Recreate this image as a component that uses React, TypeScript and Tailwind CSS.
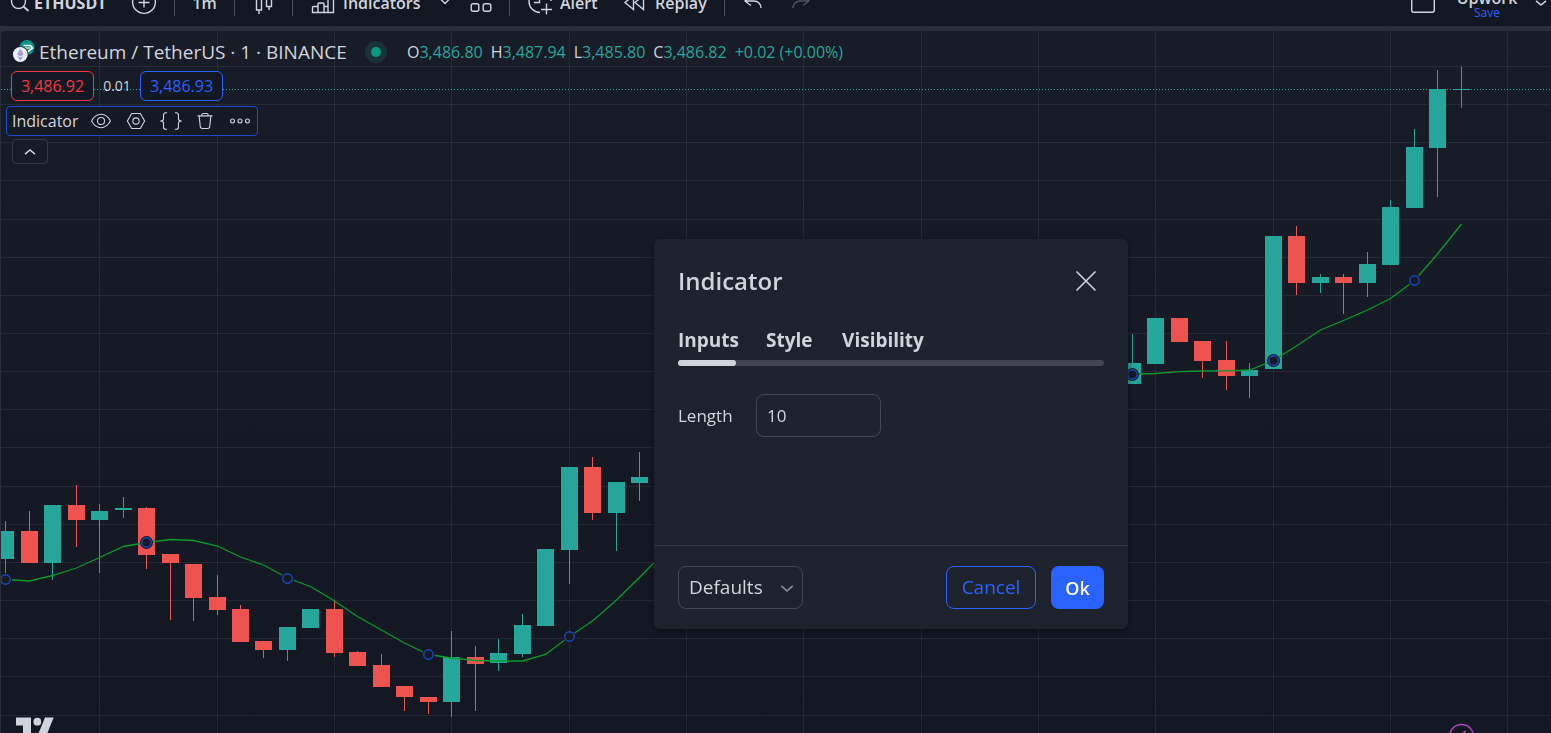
import React, { useState } from 'react';

type Candle = [x: number, top: number, bottom: number, high: number, low: number, up: boolean];

// x, body top, body bottom, wick top, wick bottom, up
const candles: Candle[] = [
  [5, 531, 559, 521, 573, true],
  [29, 531, 563, 511, 563, false],
  [52, 505, 563, 505, 580, true],
  [76, 505, 520, 485, 547, false],
  [99, 511, 520, 504, 573, true],
  [123, 508, 510, 497, 518, true],
  [146, 508, 555, 507, 569, false],
  [170, 554, 563, 554, 620, false],
  [193, 564, 598, 564, 621, false],
  [217, 597, 610, 575, 615, false],
  [240, 609, 642, 605, 642, false],
  [263, 641, 650, 641, 658, false],
  [287, 627, 650, 627, 661, true],
  [310, 609, 628, 609, 628, true],
  [334, 609, 653, 600, 657, false],
  [357, 652, 666, 651, 666, false],
  [381, 665, 687, 654, 687, false],
  [404, 686, 697, 686, 711, false],
  [428, 697, 702, 697, 714, false],
  [451, 657, 702, 631, 717, true],
  [475, 657, 664, 646, 711, false],
  [498, 653, 663, 639, 671, true],
  [522, 625, 654, 614, 657, true],
  [545, 549, 626, 549, 626, true],
  [569, 467, 550, 467, 584, true],
  [592, 467, 513, 457, 520, false],
  [616, 482, 513, 482, 551, true],
  [639, 477, 483, 452, 501, true],
  [1132, 363, 384, 334, 384, true],
  [1155, 318, 364, 318, 364, true],
  [1179, 318, 342, 318, 342, false],
  [1202, 341, 361, 341, 378, false],
  [1226, 360, 376, 341, 390, false],
  [1249, 370, 376, 363, 398, true],
  [1273, 236, 369, 236, 369, true],
  [1296, 236, 283, 226, 295, false],
  [1320, 277, 283, 274, 293, true],
  [1343, 277, 283, 274, 314, false],
  [1367, 264, 283, 252, 297, true],
  [1390, 207, 265, 200, 265, true],
  [1414, 147, 208, 129, 208, true],
  [1437, 89, 148, 70, 197, true],
  [1461, 89, 90, 67, 108, true],
];

const average =
  '5,579.5 29,581 52,575.5 76,568 99,557.5 123,546.5 146,542.5 170,539.5 193,540.5 217,546 240,557 263,565 287,578 311,587 334,601 357,616.5 381,630 404,643 428,654.5 451,658 475,660.5 498,661 522,661 545,654.5 569,636.5 592,621 616,600 639,577.5 662,554 1109,374.5 1132,374 1155,373.5 1179,371.7 1202,371 1226,370.8 1249,370 1273,360.5 1296,346 1320,330 1343,320.5 1367,310 1390,298.5 1414,280.5 1437,254 1461,224';

const markers = [
  [5.5, 579.5],
  [146.5, 542.5],
  [287.5, 578.5],
  [428.5, 654.5],
  [569.5, 636.5],
  [1132.5, 374.5],
  [1273.5, 360.5],
  [1414.5, 280.5],
];

const gridX = [99, 217, 334, 451, 569, 686, 803, 921, 1038, 1155, 1273, 1390, 1507];
const gridY = [66, 104, 142, 180, 219, 257, 295, 333, 371, 409, 447, 486, 524, 562, 600, 638, 676, 715];

const Icon: React.FC<{ children: React.ReactNode; className?: string }> = ({ children, className = 'w-7 h-7' }) => (
  <svg viewBox="0 0 28 28" fill="none" stroke="currentColor" strokeWidth="1.4" className={`shrink-0 ${className}`}>
    {children}
  </svg>
);

const Separator = () => <div className="w-px h-[26px] bg-[#4a4d57] shrink-0" />;

const Toolbar = () => (
  <header className="h-[46px] -mt-5 flex items-center shrink-0 bg-[#131722] text-[#d1d4dc] text-base font-semibold">
    <button className="w-[130px] pl-1.5 flex items-center">
      <Icon>
        <circle cx="12.5" cy="12.5" r="7" />
        <path d="M17.5 17.5l5 4.5" strokeWidth="1.8" />
      </Icon>
      <span className="font-bold">ETHUSDT</span>
    </button>
    <button aria-label="Compare symbols">
      <Icon>
        <circle cx="14" cy="13" r="11.4" />
        <path d="M14 7.5v11M8.500 13.500h11" />
      </Icon>
    </button>
    <div className="w-4" />
    <Separator />
    <button className="w-[59px]">1m</button>
    <Separator />
    <button aria-label="Candles" className="w-[57px] pl-[15px]">
      <Icon>
        <path d="M6.500 4.500h5v16.500h-5zM16.500 6.500h5v11h-5zM9 21v4M19 17.500v3.500M19 3v3.500" />
      </Icon>
    </button>
    <Separator />
    <button className="w-[138px] pl-4 flex items-center gap-1.5">
      <Icon>
        <path d="M3.500 23.500v-5a1 1 0 0 1 1-1h4.500v6zM9 23.500v-8.500a1 1 0 0 1 1-1h4a1 1 0 0 1 1 1v8.500zM15 23.500v-6h4v6zM19 23.500v-12.500a1 1 0 0 1 1-1h3.500a1 1 0 0 1 1 1v12.500zM3 9l7-6 5 4 8-6" />
      </Icon>
      Indicators
    </button>
    <button aria-label="Favorite indicators">
      <Icon>
        <path d="M9.500 10l4.500 4.500 4.500-4.500" />
      </Icon>
    </button>
    <button aria-label="Templates" className="ml-2">
      <Icon>
        <rect x="4.200" y="2.500" width="7.600" height="7.600" rx="2" />
        <rect x="16.200" y="2.500" width="7.600" height="7.600" rx="2" />
        <rect x="4.200" y="14.700" width="7.600" height="7.600" rx="2" />
        <rect x="16.200" y="14.700" width="7.600" height="7.600" rx="2" />
      </Icon>
    </button>
    <div className="w-3.5" />
    <Separator />
    <button className="w-24 pl-4 flex items-center gap-1.5">
      <Icon>
        <path d="M14 23.500A11 11 0 1 1 25 12M13.500 6v7.500H8M20.500 14.500v11M15 20.500h11" />
      </Icon>
      Alert
    </button>
    <button className="w-[118px] pl-[15px] flex items-center gap-1.5">
      <Icon>
        <path d="M12.500 6.500v14l-8.500-7zM22.500 6.500v14l-8.500-7z" />
      </Icon>
      Replay
    </button>
    <Separator />
    <button aria-label="Undo" className="ml-3.5">
      <Icon>
        <path d="M12 7l-6 5 6 4.500M6 12h9c4 0 7 3 7 7" />
      </Icon>
    </button>
    <button aria-label="Redo" className="ml-5 text-[#50535e]">
      <Icon>
        <path d="M16 7l6 5-6 4.500M22 12h-9c-4 0-7 3-7 7" />
      </Icon>
    </button>
    <button aria-label="Select layout" className="ml-auto">
      <Icon>
        <rect x="2.700" y="1" width="22.600" height="22.300" rx="2" />
      </Icon>
    </button>
    <button className="ml-5 w-[60px] flex flex-col items-center">
      <span className="leading-5">Upwork</span>
      <span className="text-xs leading-[10px] font-normal text-[#2962ff]">Save</span>
    </button>
    <button aria-label="Manage layouts" className="ml-3.5">
      <Icon className="w-5 h-7">
        <path d="M7 11l7 6 7-6" strokeWidth="2" />
      </Icon>
    </button>
  </header>
);

// drawn in window coordinates, shifted up by the toolbar's height
const Chart = () => (
  <svg className="absolute inset-0 w-full h-full">
    <g transform="translate(-1 -31)">
      <g fill="#f0f3fa" fillOpacity="0.07" shapeRendering="crispEdges">
        {gridX.map((x) => (
          <rect key={x} x={x} y="31" width="1" height="100%" />
        ))}
        {gridY.map((y) => (
          <rect key={y} x="0" y={y} width="100%" height="1" />
        ))}
      </g>
      <line x1="1" x2="100%" y1="89.5" y2="89.5" stroke="#26a69a" strokeDasharray="1 2" shapeRendering="crispEdges" />
      <g shapeRendering="crispEdges">
        {candles.map(([x, top, bottom, high, low, up]) => (
          <g key={x} fill={up ? '#26a69a' : '#ef5350'}>
            <rect x={x} y={high} width="1" height={low - high} />
            <rect x={x - 8} y={top} width="17" height={bottom - top} />
          </g>
        ))}
      </g>
      <polyline points={average} transform="translate(.5 0)" fill="none" stroke="#089a2b" strokeWidth="1.3" />
      {markers.map(([x, y]) => (
        <g key={x}>
          <circle cx={x} cy={y} r="6.500" fill="#151924" />
          <circle cx={x} cy={y} r="4.700" fill="none" stroke="#1c47c4" strokeWidth="1.4" />
        </g>
      ))}
      <g fill="#d1d4dc">
        <path d="M16 717.600h15V740h-8v-14.500h-7zM45 717.600h8.700L44.500 740h-8.700z" />
        <circle cx="37.300" cy="721.700" r="3.900" />
      </g>
      <g fill="none" stroke="#ab47bc" strokeWidth="1.600">
        <circle cx="1461.500" cy="736.500" r="12" />
        <path d="M1465.500 731l-7 6h6l-6 6" />
      </g>
    </g>
  </svg>
);

const Legend = () => {
  const values = [
    ['O', '3,486.80'],
    ['H', '3,487.94'],
    ['L', '3,485.80'],
    ['C', '3,486.82'],
  ];

  return (
    <div className="relative flex flex-col items-start">
      <div className="h-10 pl-2.5 pt-0.5 flex items-center whitespace-nowrap">
        <svg viewBox="0 0 24 24" className="w-6 h-6 mr-1">
          <circle cx="16" cy="7.500" r="7.500" fill="#0d9488" />
          <path d="M12.500 5.500h7l2 2.500-6.500 5" fill="none" stroke="#fff" strokeWidth="1.500" />
          <path d="M13.500 8h6" stroke="#fff" />
          <circle cx="9.300" cy="14.500" r="8.300" fill="#181c27" />
          <circle cx="9.300" cy="14.500" r="7.400" fill="#eef0fb" />
          <path d="M9.300 8.500l-3.300 6 3.300 2z" fill="#8fa3ef" />
          <path d="M9.300 8.500l3.300 6-3.300 2z" fill="#a78be0" />
          <path d="M6 15.700l3.300 4.800 3.300-4.800-3.300 2z" fill="#8a92d8" />
        </svg>
        <h1 className="w-[326px] text-[19px] text-[#d1d4dc] font-medium">Ethereum / TetherUS · 1 · BINANCE</h1>
        <span className="w-[22px] h-[22px] rounded-full bg-[#1a3338] flex items-center justify-center">
          <span className="w-2.5 h-2.5 rounded-full bg-[#089981]" />
        </span>
        <div className="ml-5 flex gap-2 text-base text-[#26a69a]">
          {values.map(([label, value]) => (
            <span key={label}>
              <span className="text-[#d1d4dc]">{label}</span>
              {value}
            </span>
          ))}
          <span>+0.02 (+0.00%)</span>
        </div>
      </div>

      <div className="pl-2.5 flex items-center">
        <button className="w-[83px] h-[30px] rounded-md border border-[#f23645] bg-[#131722] text-base text-[#f23645]">3,486.92</button>
        <span className="w-[46px] text-center text-sm font-medium text-[#d1d4dc]">0.01</span>
        <button className="w-[83px] h-[30px] rounded-md border border-[#2962ff] bg-[#131722] text-base text-[#2962ff]">3,486.93</button>
      </div>

      <div className="ml-[5px] mt-[5px] w-[252px] h-[30px] pl-[5px] flex items-center rounded-sm border border-[#1d4bd0] bg-[#151924] text-[#d1d4dc]">
        <span className="w-[73px] text-base">Indicator</span>
        <button aria-label="Hide" className="w-[35px] flex justify-center">
          <Icon className="w-[22px] h-[22px]">
            <path d="M2 14c3-5.500 7-8.500 12-8.500s9 3 12 8.500c-3 5.500-7 8.500-12 8.500S5 19.500 2 14z" />
            <circle cx="14" cy="14" r="4.500" />
          </Icon>
        </button>
        <button aria-label="Settings" className="w-[35px] flex justify-center">
          <Icon className="w-[22px] h-[22px]">
            <path d="M8.500 4.500h11L25 14l-5.500 9.500h-11L3 14z" />
            <circle cx="14" cy="14" r="4" />
          </Icon>
        </button>
        <button aria-label="Source code" className="w-[35px] flex justify-center">
          <Icon className="w-[22px] h-[22px]">
            <path d="M9 3.500H7.500a3 3 0 0 0-3 3V11c0 2-1.500 3-4 3 2.500 0 4 1 4 3v4.500a3 3 0 0 0 3 3H9M19 3.500h1.500a3 3 0 0 1 3 3V11c0 2 1.500 3 4 3-2.500 0-4 1-4 3v4.500a3 3 0 0 1-3 3H19" />
          </Icon>
        </button>
        <button aria-label="Remove" className="w-[35px] flex justify-center">
          <Icon className="w-[22px] h-[22px]">
            <path d="M4.500 7.500h19M10 7.500v-1a2 2 0 0 1 2-2h4a2 2 0 0 1 2 2v1M6.500 7.500l1.500 13.500a2.500 2.500 0 0 0 2.500 2.500h7a2.500 2.500 0 0 0 2.500-2.500l1.500-13.500" />
          </Icon>
        </button>
        <button aria-label="More" className="w-[35px] flex justify-center">
          <Icon className="w-[22px] h-[22px]">
            <circle cx="4.500" cy="14" r="2.500" />
            <circle cx="14" cy="14" r="2.500" />
            <circle cx="23.500" cy="14" r="2.500" />
          </Icon>
        </button>
      </div>

      <button
        aria-label="Collapse legend"
        className="ml-[11px] mt-[3px] w-9 h-[25px] flex items-center justify-center rounded-sm border border-[#363a45] bg-[#171b26] text-[#d1d4dc]"
      >
        <Icon className="w-5 h-5">
          <path d="M7 17l7-6 7 6" strokeWidth="2" />
        </Icon>
      </button>
    </div>
  );
};

const tabs = [
  { name: 'Inputs', width: 'w-[58px]' },
  { name: 'Style', width: 'w-[46px]' },
  { name: 'Visibility', width: 'w-[82px]' },
];

const IndicatorDialog = () => {
  const [tab, setTab] = useState('Inputs');
  const [length, setLength] = useState('10');

  return (
    <div
      role="dialog"
      aria-labelledby="dialog-title"
      className="fixed left-[654px] top-[239px] w-[474px] rounded-md bg-[#1e222d] text-[#d1d4dc] shadow-[0_2px_6px_rgba(0,0,0,0.45)]"
    >
      <div className="h-[84px] px-6 flex items-center justify-between">
        <h2 id="dialog-title" className="text-2xl font-semibold">Indicator</h2>
        <button aria-label="Close" className="mr-1">
          <Icon>
            <path d="M4.500 4.500l19 19M23.500 4.500l-19 19" strokeWidth="1.600" />
          </Icon>
        </button>
      </div>

      <div className="px-6">
        <div role="tablist" className="h-[43px] flex gap-[30px] relative">
          <div className="absolute inset-x-0 bottom-0 h-1.5 rounded-full bg-[#434651]" />
          {tabs.map((t) => (
            <button
              key={t.name}
              role="tab"
              aria-selected={tab === t.name}
              onClick={() => setTab(t.name)}
              className={`relative flex flex-col justify-between whitespace-nowrap text-[19px] leading-[34px] font-bold ${t.width}`}
            >
              {t.name}
              {tab === t.name && <span className="w-full h-1.5 rounded-full bg-[#d1d4dc]" />}
            </button>
          ))}
        </div>

        <div className="mt-7 mb-[108px] flex items-center text-[17px] font-medium">
          <label htmlFor="length" className="w-[78px]">Length</label>
          <input
            id="length"
            value={length}
            onChange={(e) => setLength(e.target.value)}
            className="w-[125px] h-[43px] px-2.5 rounded-lg border border-[#434651] bg-transparent outline-none"
          />
        </div>
      </div>

      <div className="px-6 py-5 flex items-center border-t border-[#363a45] text-[19px]">
        <div className="relative">
          <select
            aria-label="Defaults"
            className="w-[125px] h-[43px] pl-2.5 appearance-none rounded-lg border border-[#434651] bg-transparent font-medium outline-none"
          >
            <option>Defaults</option>
          </select>
          <Icon className="w-5 h-5 absolute right-1.5 top-3 pointer-events-none text-[#868993]">
            <path d="M6 11l8 7 8-7" strokeWidth="2.500" />
          </Icon>
        </div>
        <button className="ml-auto w-[90px] h-[43px] rounded-lg border border-[#2962ff] text-[#2962ff]">Cancel</button>
        <button className="ml-[15px] w-[53px] h-[43px] rounded-lg bg-[#2962ff] text-lg text-white font-semibold">Ok</button>
      </div>
    </div>
  );
};

export default function App() {
  return (
    <div className="h-screen overflow-hidden flex flex-col bg-[#2a2e39] font-['Open_Sans',sans-serif]">
      <Toolbar />
      <main className="relative flex-1 mt-[5px] ml-px rounded-tl overflow-hidden bg-linear-to-b from-[#181c27] to-[#131722]">
        <Chart />
        <Legend />
      </main>
      <IndicatorDialog />
    </div>
  );
}
